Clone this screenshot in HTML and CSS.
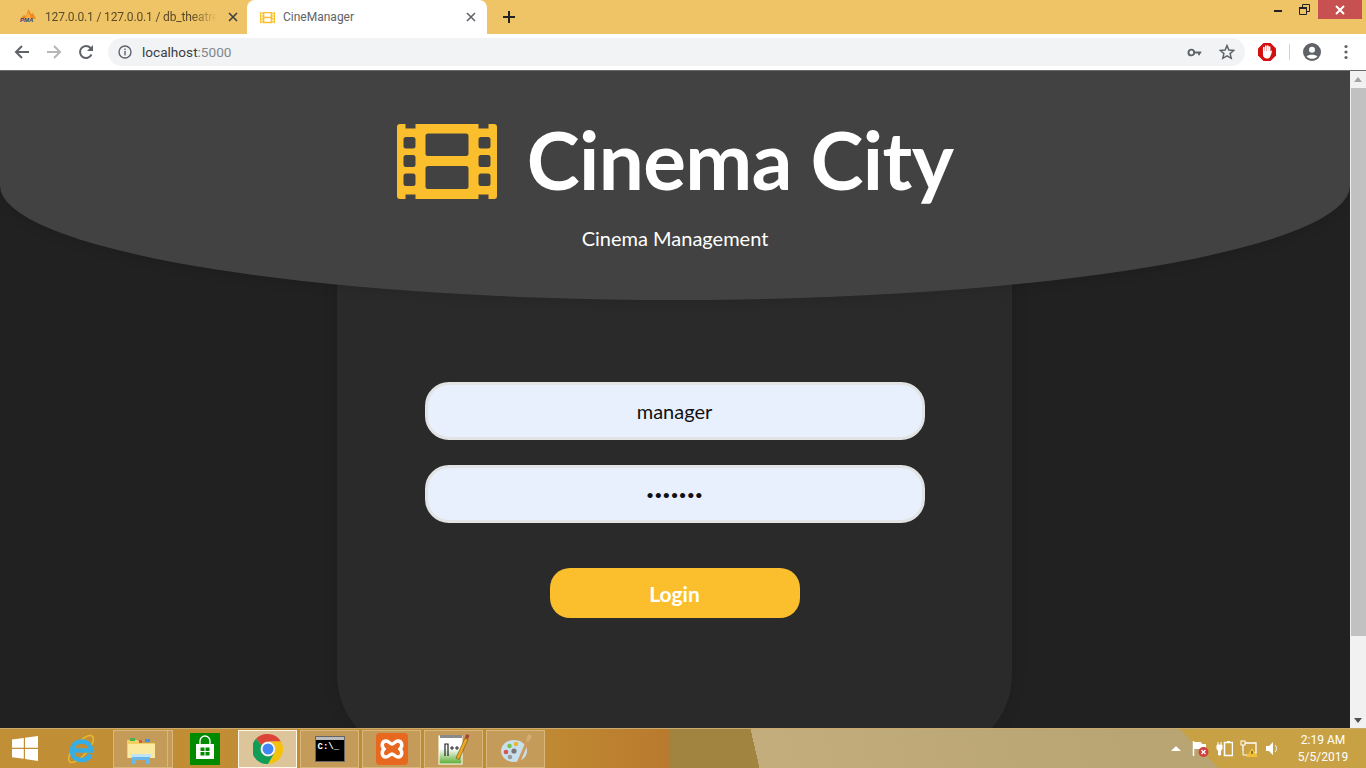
FILE: index.html
```html
<!DOCTYPE html>
<html lang="en">
<head>
<meta charset="utf-8">
<title>CineManager</title>
<link rel="stylesheet" href="styles.css">
</head>
<body>
<div class="tabstrip">
  <div class="tab tab-idle">
    <span class="pma"><svg viewBox="0 0 18 14" width="18" height="14"><path d="M1 10 L5 6 L7 7 L9.5 0 L12 5 L14 4 L17 10 Z" fill="#f08a24"/><path d="M6 10 L9.5 3 L12 10 Z" fill="#fbb03b"/></svg><b class="pma-text">PMA</b></span>
    <span class="tab-title fade">127.0.0.1 / 127.0.0.1 / db_theatre</span>
    <svg class="tab-x" viewBox="0 0 10 10" width="10" height="10"><path d="M1 1 L9 9 M9 1 L1 9" stroke="#3c4043" stroke-width="1.6"/></svg>
  </div>
  <div class="tab tab-active">
    <svg class="fav" viewBox="0 0 100 75" width="15" height="13"><path fill="#fbbf2d" fill-rule="evenodd" d="M4 0H8V5H19V0H81V5H92V0H96Q100 0 100 4V71Q100 75 96 75H92V70H81V75H19V70H8V75H4Q0 75 0 71V4Q0 0 4 0ZM7 13V24H18V13ZM7 31V43H18V31ZM7 50V62H18V50ZM82 13V24H93V13ZM82 31V43H93V31ZM82 50V62H93V50ZM29 9V32H71V9ZM29 42V65H71V42Z"/></svg>
    <span class="tab-title">CineManager</span>
    <svg class="tab-x" viewBox="0 0 10 10" width="10" height="10"><path d="M1 1 L9 9 M9 1 L1 9" stroke="#5f6368" stroke-width="1.6"/></svg>
  </div>
  <svg class="plus" viewBox="0 0 12 12" width="12" height="12"><path d="M6 0V12M0 6H12" stroke="#222" stroke-width="2"/></svg>
  <div class="winctl">
    <span class="win-btn"><svg viewBox="0 0 10 10" width="10" height="10"><rect x="1" y="5" width="8" height="2" fill="#222"/></svg></span>
    <span class="win-btn"><svg viewBox="0 0 11 11" width="11" height="11"><path d="M0.5 3.5H7.5V10.5H0.5ZM3.5 3V0.5H10.5V7.5H8" fill="none" stroke="#222"/><rect x="0" y="3" width="8" height="2" fill="#222"/></svg></span>
    <span class="win-close"><svg viewBox="0 0 10 10" width="10" height="10"><path d="M1 1 L9 9 M9 1 L1 9" stroke="#fff" stroke-width="2"/></svg></span>
  </div>
</div>

<div class="toolbar">
  <svg class="nav" viewBox="0 0 16 16" width="16" height="16"><path d="M15 8H2M8 2L2 8L8 14" fill="none" stroke="#5f6368" stroke-width="2"/></svg>
  <svg class="nav" viewBox="0 0 16 16" width="16" height="16"><path d="M1 8H14M8 2L14 8L8 14" fill="none" stroke="#b4b6b8" stroke-width="2"/></svg>
  <svg class="nav" viewBox="0 0 16 16" width="16" height="16"><path d="M13.5 10.5A6 6 0 1 1 12.5 4" fill="none" stroke="#5f6368" stroke-width="2"/><path d="M15 1V7H9Z" fill="#5f6368"/></svg>
  <div class="omnibox">
    <svg viewBox="0 0 14 14" width="14" height="14"><circle cx="7" cy="7" r="6" fill="none" stroke="#5f6368" stroke-width="1.4"/><rect x="6.3" y="6" width="1.4" height="4.4" fill="#5f6368"/><rect x="6.3" y="3.6" width="1.4" height="1.5" fill="#5f6368"/></svg>
    <span class="url">localhost<span class="url-port">:5000</span></span>
    <span class="omni-right">
      <svg viewBox="0 0 16 10" width="15" height="9"><circle cx="4.5" cy="5" r="3.2" fill="none" stroke="#5f6368" stroke-width="2.2"/><path d="M7 3.8H15.5V6.2H14V8H12V6.2H7Z" fill="#5f6368"/></svg>
      <svg viewBox="0 0 16 16" width="16" height="16"><path d="M8 1.6L9.9 6.1L14.7 6.5L11.1 9.6L12.2 14.3L8 11.8L3.8 14.3L4.9 9.6L1.3 6.5L6.1 6.1Z" fill="none" stroke="#5f6368" stroke-width="1.5"/></svg>
    </span>
  </div>
  <svg class="adblock" viewBox="0 0 18 18" width="18" height="18"><path d="M5.5 0H12.5L18 5.5V12.5L12.5 18H5.5L0 12.5V5.500Z" fill="#d40f0f"/><path d="M5.800 4.500V10M7.800 3.200V10M9.800 3.200V10M11.600 4.200V10" stroke="#fff" stroke-width="1.700" stroke-linecap="round"/><path d="M5 8H12.500L14 7.500L13.500 10.500L12 14C11.500 15 10.500 15.500 9 15.500C7 15.500 5 14 5 12Z" fill="#fff"/></svg>
  <span class="sep"></span>
  <svg class="acct" viewBox="0 0 18 18" width="18" height="18"><circle cx="9" cy="9" r="9" fill="#5f6368"/><circle cx="9" cy="6.8" r="3" fill="#fff"/><path d="M3.6 13.4C5 11.2 13 11.2 14.4 13.4C13 15 11 15.8 9 15.8C7 15.8 5 15 3.6 13.4Z" fill="#fff"/></svg>
  <svg class="dots" viewBox="0 0 4 16" width="4" height="16"><circle cx="2" cy="2.5" r="1.6" fill="#5f6368"/><circle cx="2" cy="8" r="1.6" fill="#5f6368"/><circle cx="2" cy="13.5" r="1.6" fill="#5f6368"/></svg>
</div>

<div class="viewport">
  <main class="page">
    <header class="hero">
      <div class="brand">
        <svg class="logo" viewBox="0 0 100 75" width="100" height="75"><path fill="#fbbf2d" fill-rule="evenodd" d="M3 0H8.500V4.500H18.500V0H81.500V4.500H91.500V0H97Q100 0 100 3V72Q100 75 97 75H91.500V70.500H81.500V75H18.500V70.500H8.500V75H3Q0 75 0 72V3Q0 0 3 0ZM9 13Q6.500 13 6.500 15.500V22Q6.500 24.500 9 24.500H16Q18.500 24.500 18.500 22V15.500Q18.500 13 16 13ZM9 31Q6.500 31 6.500 33.500V40.500Q6.500 43 9 43H16Q18.500 43 18.500 40.500V33.500Q18.500 31 16 31ZM9 49.500Q6.500 49.500 6.500 52V59.500Q6.500 62 9 62H16Q18.500 62 18.500 59.500V52Q18.500 49.500 16 49.500ZM84 13Q81.500 13 81.500 15.500V22Q81.500 24.500 84 24.500H91Q93.500 24.500 93.500 22V15.500Q93.500 13 91 13ZM84 31Q81.500 31 81.500 33.500V40.500Q81.500 43 84 43H91Q93.500 43 93.500 40.500V33.500Q93.500 31 91 31ZM84 49.500Q81.500 49.500 81.500 52V59.500Q81.500 62 84 62H91Q93.500 62 93.500 59.500V52Q93.500 49.500 91 49.500ZM31 9.500Q28.500 9.500 28.500 12V29.500Q28.500 32 31 32H69Q71.500 32 71.500 29.500V12Q71.500 9.500 69 9.500ZM31 42Q28.500 42 28.500 44.500V62.500Q28.500 65 31 65H69Q71.500 65 71.500 62.500V44.500Q71.500 42 69 42Z"/></svg>
        <h1 class="title">Cinema City</h1>
      </div>
      <p class="subtitle">Cinema Management</p>
    </header>
    <section class="card">
      <form class="login">
        <input class="field" type="text" value="manager">
        <input class="field field-pass" type="password" value="1234567">
        <button class="submit" type="button">Login</button>
      </form>
    </section>
  </main>
  <aside class="scrollbar">
    <span class="arrow-up"></span>
    <span class="thumb"></span>
    <span class="arrow-down"></span>
  </aside>
</div>

<footer class="taskbar">
  <svg class="start" viewBox="0 0 26 25" width="26" height="25"><path d="M0 3.600L11.800 2V11.800H0ZM13 1.800L26 0V11.800H13ZM0 13H11.800V22.800L0 21.200ZM13 13H26V25L13 23.100Z" fill="#fff"/></svg>
  <svg class="ie" viewBox="0 0 30 30" width="30" height="30"><ellipse cx="15" cy="15" rx="17" ry="6.500" transform="rotate(-48 15 15)" fill="none" stroke="#e8b830" stroke-width="1.500"/><path d="M6 16.500H25C25 11 21 7.500 15.500 7.500C10 7.500 6 11.500 6 17C6 22.500 10 26 15.500 26C20 26 23 24 24.500 20.500" fill="none" stroke="#35aee6" stroke-width="4.500"/></svg>
  <div class="tb-group">
    <div class="tb-btn tb-explorer">
      <svg viewBox="0 0 30 30" width="30" height="30"><path d="M1 6H12L14 9H29V24H1Z" fill="#f0d060"/><rect x="2" y="10" width="27" height="14" fill="#fbe9a0"/><rect x="4" y="4" width="5" height="3" fill="#4caf50"/><rect x="13" y="6" width="3" height="3" fill="#d9534f"/><rect x="19" y="5" width="5" height="3" fill="#4a90d9"/><path d="M6 30V23H24V30H20V26H10V30Z" fill="#6ab7e8"/><rect x="5" y="20" width="20" height="3" fill="#bfe3f7"/></svg>
    </div>
    <span class="tb-stack"></span>
  </div>
  <svg class="store" viewBox="0 0 30 32" width="30" height="32"><rect width="30" height="32" fill="#008a00"/><path d="M6 11H24V26H6Z" fill="#fff"/><path d="M10 11V8A5 5 0 0 1 20 8V11" fill="none" stroke="#fff" stroke-width="1.300"/><path d="M10.500 14.500H14.500V18H10.500ZM15.500 14.500H19.500V18H15.500ZM10.500 19H14.500V22.500H10.500ZM15.500 19H19.500V22.500H15.500Z" fill="#008a00"/></svg>
  <div class="tb-btn tb-on">
    <svg viewBox="0 0 30 30" width="30" height="30"><path d="M15 0A15 15 0 0 1 28 7.500H15A7.500 7.500 0 0 0 8.500 11.300L3 4.800A15 15 0 0 1 15 0Z" fill="#db4437"/><path d="M28 7.500A15 15 0 0 1 15 30L21.500 18.800A7.500 7.500 0 0 0 21.500 11.300A7.500 7.500 0 0 0 15 7.500Z" fill="#f4c20d"/><path d="M3 4.800L8.500 11.300A7.500 7.500 0 0 0 15 22.500C17.800 22.500 20.200 21 21.500 18.800L15 30A15 15 0 0 1 3 4.800Z" fill="#0f9d58"/><circle cx="15" cy="15" r="7" fill="#fff"/><circle cx="15" cy="15" r="5.500" fill="#4285f4"/></svg>
  </div>
  <div class="tb-btn">
    <span class="cmd"><span class="cmd-bar"></span><span class="cmd-text">C:\_</span></span>
  </div>
  <div class="tb-btn">
    <svg viewBox="0 0 32 32" width="32" height="32"><rect width="32" height="32" rx="4" fill="#e8681f"/><path d="M10 8C13 8 14 11 16 11C18 11 19 8 22 8C26 8 27 13 24 16C27 19 26 24 22 24C19 24 18 21 16 21C14 21 13 24 10 24C6 24 5 19 8 16C5 13 6 8 10 8Z" fill="#e8681f" stroke="#fff" stroke-width="3.500"/></svg>
  </div>
  <div class="tb-btn">
    <svg viewBox="0 0 32 32" width="32" height="32"><defs><linearGradient id="npp" x1="0" y1="0" x2="0" y2="1"><stop offset=".45" stop-color="#fff"/><stop offset="1" stop-color="#5aab2e"/></linearGradient></defs><rect x="1" y="3" width="23" height="28" fill="url(#npp)" stroke="#fff"/><path d="M2 2H24V5H2Z" fill="#8a8a8a"/><path d="M7 23V11H10V23" fill="none" stroke="#222" stroke-width="1.200"/><path d="M12 15H16M14 13V17M17 15H21M19 13V17" stroke="#222"/><path d="M18 25L27 5L30 6.500L21 26.500Z" fill="#eeaa22" stroke="#6b4a14" stroke-width=".6"/><path d="M27 4.500L28.500 1L31.500 2.500L30 6Z" fill="#a8423a"/></svg>
  </div>
  <div class="tb-btn">
    <svg viewBox="0 0 32 32" width="32" height="32"><ellipse cx="14" cy="18" rx="13" ry="11" fill="#c8dfec"/><circle cx="6" cy="19" r="2.300" fill="#d9534f"/><circle cx="9.500" cy="13" r="2.300" fill="#7cc24a"/><circle cx="16" cy="11" r="2.300" fill="#e8b830"/><circle cx="10" cy="24" r="2.300" fill="#9a9a9a"/><circle cx="14" cy="18" r="2.600" fill="#777"/><path d="M17 29L26 8L28.500 9L20 30Z" fill="#cf9a5a"/><path d="M26 8L28 1L32 3L28.500 9Z" fill="#d8ab70"/></svg>
  </div>
  <div class="tray">
    <span class="tray-up"></span>
    <svg viewBox="0 0 17 17" width="17" height="17"><path d="M1.500 1V16" stroke="#fff" stroke-width="1.500"/><path d="M2 2H9L10 4H14V9H2Z" fill="#fff"/><circle cx="11.500" cy="12" r="5" fill="#d23f3f"/><path d="M9.500 10L13.500 14M13.500 10L9.500 14" stroke="#fff" stroke-width="1.300"/></svg>
    <svg viewBox="0 0 17 17" width="17" height="17"><path d="M1 5H6V9L4.500 11V15H2.500V11L1 9ZM2 2V5M5 2V5" fill="#fff" stroke="#fff"/><rect x="8.500" y="2.500" width="8" height="13" fill="none" stroke="#fff" stroke-width="1.500"/><rect x="11" y="1" width="3" height="2" fill="#fff"/></svg>
    <svg viewBox="0 0 18 17" width="18" height="17"><rect x="1" y="1" width="4" height="4" fill="none" stroke="#fff"/><path d="M5 3H16V13H12M3 5V11" fill="none" stroke="#fff" stroke-width="1.300"/><path d="M3 11V15H8" fill="none" stroke="#fff"/><path d="M12 8L18 17H6Z" fill="#f2c037"/><rect x="11.500" y="11" width="1" height="3" fill="#333"/></svg>
    <svg viewBox="0 0 14 17" width="14" height="17"><path d="M1 6H4L8 2V15L4 11H1Z" fill="#fff"/><path d="M10 5C12 7 12 10 10 12" fill="none" stroke="#fff"/></svg>
    <div class="clock"><span>2:19 AM</span><span>5/5/2019</span></div>
  </div>
</footer>
</body>
</html>
```
FILE: styles.css
```css
* { box-sizing: border-box; }
html, body { margin: 0; height: 100%; }
body {
  width: 1366px;
  height: 768px;
  overflow: hidden;
  display: flex;
  flex-direction: column;
  font-family: Roboto, "Noto Sans", sans-serif;
  background: #212121;
}
svg { display: block; flex: none; }

/* Browser tab strip */
.tabstrip {
  height: 34px;
  flex: none;
  display: flex;
  align-items: stretch;
  background: #efc466;
}
.tab {
  display: flex;
  align-items: center;
  font-size: 12px;
}
.tab-idle { width: 247px; padding: 0 9px 0 19px; color: #5a4a28; }
.tab-active {
  width: 240px;
  padding: 0 11px 0 13px;
  background: #fff;
  color: #5f6368;
  border-radius: 8px 8px 0 0;
}
.pma { position: relative; width: 18px; height: 16px; margin-right: 8px; flex: none; }
.pma-text {
  position: absolute;
  left: 1px;
  top: 8px;
  font: italic 700 6px "Liberation Sans", sans-serif;
  color: #1d3f87;
}
.fav { margin-right: 8px; }
.tab-title { flex: 1; min-width: 0; white-space: nowrap; }
.fade {
  -webkit-mask-image: linear-gradient(to right, #000 85%, transparent);
  mask-image: linear-gradient(to right, #000 85%, transparent);
  margin-right: 11px;
  letter-spacing: -.15px;
}
.plus { align-self: center; margin-left: 16px; }
.winctl { margin-left: auto; display: flex; align-items: flex-start; padding-right: 4px; }
.win-btn {
  width: 26px;
  height: 19px;
  display: flex;
  align-items: center;
  justify-content: center;
}
.win-close {
  width: 44px;
  height: 19px;
  margin-left: 1px;
  background: #c75050;
  display: flex;
  align-items: center;
  justify-content: center;
}

/* Toolbar */
.toolbar {
  height: 36px;
  flex: none;
  display: flex;
  align-items: center;
  padding: 0 0 0 14px;
  background: #fff;
}
.nav { margin-right: 16px; }
.omnibox {
  width: 1137px;
  height: 28px;
  margin-left: -2px;
  display: flex;
  align-items: center;
  padding: 0 10px 0 10px;
  border-radius: 14px;
  background: #f1f3f4;
}
.url { margin-left: 10px; font-size: 13.6px; color: #3c4043; }
.url-port { color: #80868b; }
.omni-right { margin-left: auto; display: flex; align-items: center; gap: 17px; }
.adblock { margin-left: 13px; }
.sep { width: 1px; height: 16px; margin-left: 13px; background: #d0d1d2; }
.acct { margin-left: 13px; }
.dots { margin-left: 23px; }

/* Page viewport */
.viewport { flex: 1; display: flex; min-height: 0; border-top: 1px solid #6a6a6a; }
.page {
  width: 1350px;
  overflow: hidden;
  background: #212121;
  font-family: Lato, Inter, sans-serif;
}
.hero {
  position: relative;
  z-index: 1;
  height: 229px;
  padding-top: 53px;
  background: #424242;
  border-radius: 0 0 50% 50%;
  box-shadow: 0 2px 12px rgba(0, 0, 0, .12);
  text-align: center;
}
.brand { display: flex; justify-content: center; align-items: center; gap: 30px; height: 75px; }
.title { margin: 0 0 4px; font-size: 80px; line-height: 75px; font-weight: 700; color: #fff; letter-spacing: -.6px; }
.subtitle { margin: 26px 0 0; font-size: 20px; line-height: 26px; font-weight: 400; color: #fff; }

.card {
  width: 675px;
  height: 495px;
  margin: -40px 0 0 337px;
  padding-top: 122px;
  background: #2a2a2a;
  border-radius: 0 0 80px 80px;
  box-shadow: 0 0 16px rgba(0, 0, 0, .1);
}
.login { display: flex; flex-direction: column; align-items: center; }
.field {
  display: block;
  width: 500px;
  height: 58px;
  margin-bottom: 25px;
  border: 3px solid #e2e3e5;
  border-radius: 24px;
  background: #e8f0fe;
  color: #111;
  font: 400 20px Lato, Inter, sans-serif;
  text-align: center;
  outline: none;
}
.field-pass { margin-bottom: 45px; font-size: 14px; }
.submit {
  width: 250px;
  height: 50px;
  border: 0;
  border-radius: 20px;
  background: #fbbf2d;
  color: #fff;
  font: 700 21px Lato, Inter, sans-serif;
}

/* Scrollbar */
.scrollbar {
  width: 16px;
  flex: none;
  display: flex;
  flex-direction: column;
  align-items: center;
  background: #f1f1f1;
  padding-top: 6px;
}
.arrow-up { border: 4px solid transparent; border-top: 0; border-bottom: 5px solid #a3a3a3; }
.thumb { width: 15px; height: 548px; margin: 6px 0 0; background: #c1c1c1; }
.arrow-down { margin-top: auto; margin-bottom: 5px; border: 4px solid transparent; border-bottom: 0; border-top: 5px solid #505050; }

/* Taskbar */
.taskbar {
  height: 40px;
  flex: none;
  display: flex;
  align-items: center;
  padding: 1px 0 1px 12px;
  border-top: 1px solid #c9aa6e;
  background-color: #c08c36;
  background-image:
    linear-gradient(45deg, transparent 86.7%, #c8a144 86.7%),
    linear-gradient(77deg, transparent 740px, #c3ad7c 740px, #b9a473 1100px),
    linear-gradient(90deg, #c18f36 0, #c08a33 540px, #b97a2e 668px, #a08440 671px, #a08440 780px, transparent 780px);
}
.start { margin-right: 28px; }
.ie { margin-right: 17px; }
.tb-group { display: flex; margin-right: 17px; }
.tb-btn {
  width: 59px;
  height: 38px;
  margin-right: 3px;
  display: flex;
  align-items: center;
  justify-content: center;
  border: 1px solid #d9b679;
  background: #c59b5a;
}
.tb-explorer { width: 55px; margin-right: 0; }
.tb-stack { width: 5px; border: 1px solid #d9b679; border-left: 0; background: #c59b5a; }
.store { margin-right: 18px; }
.tb-on { background: #dcc59b; border-color: #fff8e8; }
.cmd {
  width: 30px;
  height: 26px;
  display: block;
  background: #000;
  border: 1px solid #666;
  overflow: hidden;
}
.cmd-bar { display: block; height: 3px; background: #bbb; }
.cmd-text { display: block; font: 700 9px/14px "Liberation Mono", monospace; color: #fff; padding-left: 2px; }
.tray {
  margin-left: auto;
  display: flex;
  align-items: center;
  gap: 7px;
}
.tray-up { width: 0; height: 0; margin-right: 4px; border: 5px solid transparent; border-top: 0; border-bottom: 5px solid #fff; }
.clock {
  width: 70px;
  margin-left: 2px;
  margin-right: 8px;
  display: flex;
  flex-direction: column;
  align-items: center;
  font-size: 12px;
  line-height: 17px;
  color: #fff;
}
```
